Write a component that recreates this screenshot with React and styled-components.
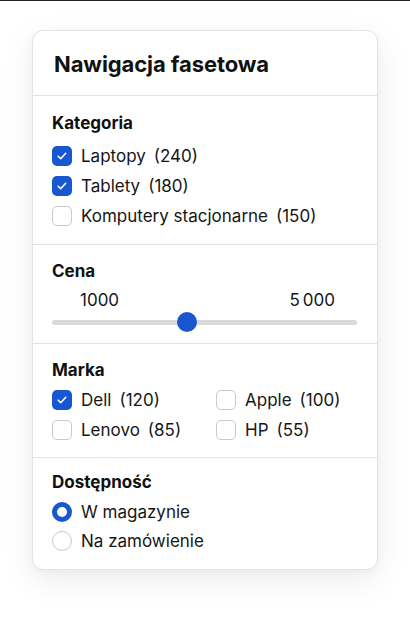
import styled, { createGlobalStyle } from "styled-components";

const GlobalStyle = createGlobalStyle`
  html, body {
    margin: 0;
    padding: 0;
    background: #fff;
  }
  body {
    font-family: Inter, "Liberation Sans", sans-serif;
    color: #111;
    border-top: 1px solid #222;
  }
`;

const categories = [
  { label: "Laptopy", count: 240, checked: true },
  { label: "Tablety", count: 180, checked: true },
  { label: "Komputery stacjonarne", count: 150, checked: false },
];

const brands = [
  { label: "Dell", count: 120, checked: true },
  { label: "Apple", count: 100, checked: false },
  { label: "Lenovo", count: 85, checked: false },
  { label: "HP", count: 55, checked: false },
];

const availability = [
  { label: "W magazynie", selected: true },
  { label: "Na zamówienie", selected: false },
];

function Check({ checked }) {
  return (
    <Box $checked={checked}>
      {checked && (
        <svg width="14" height="14" viewBox="0 0 14 14">
          <path d="M3.2 7.2l2.5 2.5 5-5.4" fill="none" stroke="#fff" strokeWidth="1.6" strokeLinecap="round" strokeLinejoin="round" />
        </svg>
      )}
    </Box>
  );
}

export default function App() {
  return (
    <>
      <GlobalStyle />
      <Page>
        <Card>
          <Header>Nawigacja fasetowa</Header>

          <Section $top={15} $bottom={13}>
            <Heading>Kategoria</Heading>
            {categories.map((c) => (
              <Row key={c.label}>
                <Check checked={c.checked} />
                <Label>{c.label}<Count>({c.count})</Count></Label>
              </Row>
            ))}
          </Section>

          <Section $bottom={11}>
            <Heading>Cena</Heading>
            <Values>
              <span>1000</span>
              <span>5{"\u202f"}000</span>
            </Values>
            <Slider>
              <Track />
              <Thumb style={{ left: "44.3%" }} />
            </Slider>
          </Section>

          <Section>
            <Heading $mb={3}>Marka</Heading>
            <BrandGrid>
              {brands.map((b) => (
                <Row key={b.label}>
                  <Check checked={b.checked} />
                  <Label>{b.label}<Count>({b.count})</Count></Label>
                </Row>
              ))}
            </BrandGrid>
          </Section>

          <Section $top={12} $last>
            <Heading $mb={3}>Dostępność</Heading>
            {availability.map((a) => (
              <Row key={a.label} $h={29}>
                <Radio $selected={a.selected} />
                <Label>{a.label}</Label>
              </Row>
            ))}
          </Section>
        </Card>
      </Page>
    </>
  );
}

const Page = styled.div`
  padding: 29px 31px 40px 32px;
`;

const Card = styled.div`
  width: 346px;
  box-sizing: border-box;
  background: #fff;
  border: 1px solid #e4e4e4;
  border-radius: 11px;
  box-shadow: 0 10px 32px rgba(0, 0, 0, 0.08), 0 2px 6px rgba(0, 0, 0, 0.03);
`;

const Header = styled.div`
  padding: 19px 20px 0 21px;
  height: 65px;
  box-sizing: border-box;
  font-size: 22px;
  font-weight: 700;
  line-height: 28px;
  letter-spacing: -0.1px;
  border-bottom: 1px solid #e3e3e3;
`;

const Section = styled.div`
  padding: ${(p) => p.$top ?? 14}px 20px ${(p) => (p.$last ? 14 : p.$bottom ?? 12)}px 19px;
  border-bottom: ${(p) => (p.$last ? "none" : "1px solid #e3e3e3")};
`;

const Heading = styled.div`
  font-size: 17px;
  font-weight: 700;
  line-height: 24px;
  margin-bottom: ${(p) => p.$mb ?? 6}px;
`;

const Row = styled.div`
  display: flex;
  align-items: center;
  gap: 9px;
  height: ${(p) => p.$h ?? 30}px;
`;

const Box = styled.span`
  width: 20px;
  height: 20px;
  box-sizing: border-box;
  border-radius: 5px;
  flex: none;
  display: flex;
  align-items: center;
  justify-content: center;
  background: ${(p) => (p.$checked ? "#1857d0" : "#fff")};
  border: ${(p) => (p.$checked ? "none" : "1.5px solid #c9c9c9")};
`;

const Radio = styled.span`
  width: 20px;
  height: 20px;
  box-sizing: border-box;
  border-radius: 50%;
  flex: none;
  background: #fff;
  border: ${(p) => (p.$selected ? "5px solid #1857d0" : "1.5px solid #c9c9c9")};
`;

const Label = styled.span`
  font-size: 17px;
  line-height: 22px;
  color: #161616;
`;

const Count = styled.span`
  margin-left: 8px;
`;

const Values = styled.div`
  display: flex;
  justify-content: space-between;
  padding: 0 22px 0 28px;
  margin-top: 1px;
  font-size: 17px;
  line-height: 22px;
  color: #161616;
`;

const Slider = styled.div`
  position: relative;
  height: 20px;
  margin-top: 1px;
  display: flex;
  align-items: center;
`;

const Track = styled.div`
  width: 100%;
  height: 5px;
  border-radius: 3px;
  background: #dadada;
`;

const Thumb = styled.span`
  position: absolute;
  top: 0;
  width: 20px;
  height: 20px;
  margin-left: -10px;
  border-radius: 50%;
  background: #1857d0;
`;

const BrandGrid = styled.div`
  display: grid;
  grid-template-columns: 164px 1fr;
`;
